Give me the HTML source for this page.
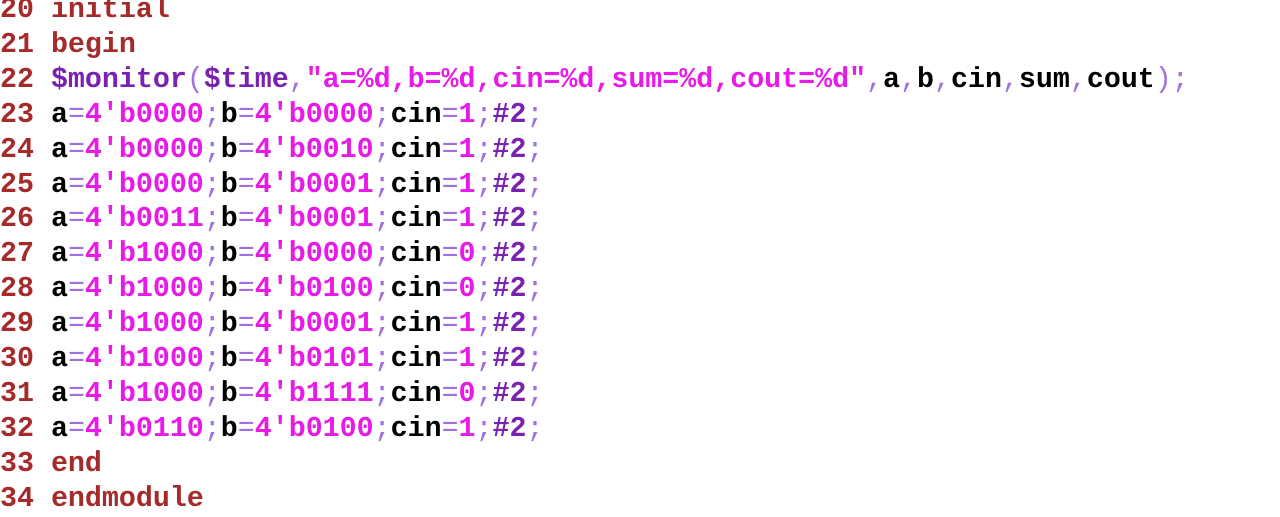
<!DOCTYPE html>
<html><head><meta charset="utf-8"><style>
html,body{margin:0;padding:0;background:#fff;width:1280px;height:517px;overflow:hidden}
pre{margin:0;position:absolute;left:0;top:-7px;font-family:"Liberation Mono",monospace;font-size:28.3px;line-height:34.9px;font-weight:bold;color:#000;letter-spacing:0}
.n,.k{color:#a52a2a}
.p{color:#a070e0;font-weight:normal}
.m{color:#e81ae8}
.f{color:#7a22b0}
</style></head><body><pre><span class="n">20</span> <span class="k">initial</span>
<span class="n">21</span> <span class="k">begin</span>
<span class="n">22</span> <span class="f">$monitor</span><span class="p">(</span><span class="f">$time</span><span class="p">,</span><span class="m">"a=%d,b=%d,cin=%d,sum=%d,cout=%d"</span><span class="p">,</span>a<span class="p">,</span>b<span class="p">,</span>cin<span class="p">,</span>sum<span class="p">,</span>cout<span class="p">);</span>
<span class="n">23</span> a<span class="p">=</span><span class="m">4'b0000</span><span class="p">;</span>b<span class="p">=</span><span class="m">4'b0000</span><span class="p">;</span>cin<span class="p">=</span><span class="m">1</span><span class="p">;</span><span class="f">#2</span><span class="p">;</span>
<span class="n">24</span> a<span class="p">=</span><span class="m">4'b0000</span><span class="p">;</span>b<span class="p">=</span><span class="m">4'b0010</span><span class="p">;</span>cin<span class="p">=</span><span class="m">1</span><span class="p">;</span><span class="f">#2</span><span class="p">;</span>
<span class="n">25</span> a<span class="p">=</span><span class="m">4'b0000</span><span class="p">;</span>b<span class="p">=</span><span class="m">4'b0001</span><span class="p">;</span>cin<span class="p">=</span><span class="m">1</span><span class="p">;</span><span class="f">#2</span><span class="p">;</span>
<span class="n">26</span> a<span class="p">=</span><span class="m">4'b0011</span><span class="p">;</span>b<span class="p">=</span><span class="m">4'b0001</span><span class="p">;</span>cin<span class="p">=</span><span class="m">1</span><span class="p">;</span><span class="f">#2</span><span class="p">;</span>
<span class="n">27</span> a<span class="p">=</span><span class="m">4'b1000</span><span class="p">;</span>b<span class="p">=</span><span class="m">4'b0000</span><span class="p">;</span>cin<span class="p">=</span><span class="m">0</span><span class="p">;</span><span class="f">#2</span><span class="p">;</span>
<span class="n">28</span> a<span class="p">=</span><span class="m">4'b1000</span><span class="p">;</span>b<span class="p">=</span><span class="m">4'b0100</span><span class="p">;</span>cin<span class="p">=</span><span class="m">0</span><span class="p">;</span><span class="f">#2</span><span class="p">;</span>
<span class="n">29</span> a<span class="p">=</span><span class="m">4'b1000</span><span class="p">;</span>b<span class="p">=</span><span class="m">4'b0001</span><span class="p">;</span>cin<span class="p">=</span><span class="m">1</span><span class="p">;</span><span class="f">#2</span><span class="p">;</span>
<span class="n">30</span> a<span class="p">=</span><span class="m">4'b1000</span><span class="p">;</span>b<span class="p">=</span><span class="m">4'b0101</span><span class="p">;</span>cin<span class="p">=</span><span class="m">1</span><span class="p">;</span><span class="f">#2</span><span class="p">;</span>
<span class="n">31</span> a<span class="p">=</span><span class="m">4'b1000</span><span class="p">;</span>b<span class="p">=</span><span class="m">4'b1111</span><span class="p">;</span>cin<span class="p">=</span><span class="m">0</span><span class="p">;</span><span class="f">#2</span><span class="p">;</span>
<span class="n">32</span> a<span class="p">=</span><span class="m">4'b0110</span><span class="p">;</span>b<span class="p">=</span><span class="m">4'b0100</span><span class="p">;</span>cin<span class="p">=</span><span class="m">1</span><span class="p">;</span><span class="f">#2</span><span class="p">;</span>
<span class="n">33</span> <span class="k">end</span>
<span class="n">34</span> <span class="k">endmodule</span>
</pre></body></html>
